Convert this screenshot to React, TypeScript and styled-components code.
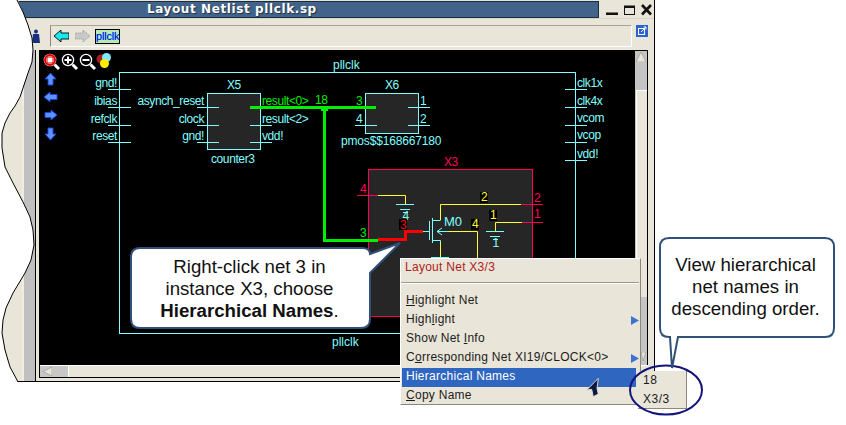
import React from "react";
import styled, { createGlobalStyle } from "styled-components";

const Global = createGlobalStyle`
  html, body { margin: 0; padding: 0; background: #fff; overflow: hidden; }
  #root { width: 846px; height: 425px; }
`;

const BEIGE = "#e9e5d8";
const CYAN = "#80ffff";
const PINK = "#ff0055";
const YEL = "#ffff33";
const GRN = "#00ee00";

const Page = styled.div`
  position: relative;
  width: 846px;
  height: 425px;
  background: #fff;
  overflow: hidden;
  font-family: "Liberation Sans", Arial, sans-serif;
`;
const Win = styled.div`
  width: 655px;
  height: 382px;
  box-sizing: border-box;
  background: ${BEIGE};
  border-right: 1px solid #000;
  border-bottom: 1px solid #000;
  display: flex;
  flex-direction: column;
`;
const TitleRow = styled.div`
  height: 19px;
  display: flex;
  flex: none;
  border-bottom: 1px solid #d8d4c6;
  box-sizing: border-box;
`;
const TitleBar = styled.div`
  width: 599px;
  height: 17px;
  margin-top: 1px;
  box-sizing: border-box;
  background: #43648a;
  border: 1px solid #1a2c40;
  border-left: 0;
  color: #fff;
  font: bold 12px "DejaVu Sans", sans-serif;
  letter-spacing: 0.6px;
  line-height: 14px;
  padding-left: 147px;
  text-shadow: 1px 1px 1px #1c3048;
  white-space: nowrap;
`;
const Controls = styled.div`
  flex: 1;
  display: flex;
  align-items: center;
  justify-content: flex-end;
  padding-right: 1px;
`;
const Toolbar = styled.div`
  height: 31px;
  flex: none;
  display: flex;
  padding: 6px 6px 3px 32px;
  box-sizing: border-box;
`;
const Person = styled.svg`
  width: 9px;
  height: 14px;
  margin: 4px 8px 0 0;
  flex: none;
`;
const ToolPanel = styled.div`
  flex: 1;
  box-sizing: border-box;
  margin-left: 1px;
  height: 22px;
  border-left: 1px solid #8d8a80;
  border-top: 1px solid #a8a59a;
  border-bottom: 1px solid #fff;
  border-right: 1px solid #fff;
  display: flex;
  align-items: center;
  padding-left: 3px;
  gap: 5px;
`;
const BackArrow = styled.svg`
  margin-right: 1px;
`;
const NetChip = styled.div`
  width: 25px;
  height: 15px;
  box-sizing: border-box;
  border: 1px solid #000;
  background: #bdeab4;
  color: #0000e0;
  font: 11px/12px "Liberation Sans", sans-serif;
  letter-spacing: -0.2px;
  white-space: nowrap;
  text-shadow: 0 0 1px #30d0ff;
`;
const EditIcon = styled.svg`
  width: 12px;
  height: 12px;
  flex: none;
  margin: 0 0 0 4px;
`;
const Body = styled.div`
  flex: 1;
  display: flex;
  min-height: 0;
`;
const LeftStrip = styled.div`
  width: 36px;
  flex: none;
  display: flex;
  justify-content: flex-end;
`;
const GrayBar = styled.div`
  width: 11px;
  background: #c0c0c0;
  border-right: 1px solid #000;
  border-left: 2px solid #efece2;
`;
const Inner = styled.div`
  width: 609px;
  margin-left: 3px;
  display: flex;
  flex-direction: column;
  border-left: 1px solid #000;
  border-bottom: 1px solid #000;
  height: 328px;
  box-sizing: border-box;
  position: relative;
`;
const CanvasRow = styled.div`
  display: flex;
  height: 315px;
  flex: none;
`;
const Canvas = styled.svg`
  width: 595px;
  height: 315px;
  display: block;
  background: #000;
  flex: none;
`;
const VScroll = styled.div`
  flex: 1;
  display: flex;
  flex-direction: column;
  background: #c4c4c4;
  border-right: 1px solid #000;
  border-top: 1px solid #000;
`;
const UpArrow = styled.div`
  height: 11px;
  flex: none;
  display: flex;
  justify-content: center;
  padding-top: 1px;
`;
const VTrackTop = styled.div`
  height: 27px;
  flex: none;
`;
const VThumb = styled.div`
  height: 206px;
  flex: none;
  margin-left: 1px;
  background: ${BEIGE};
  border-left: 1px solid #fff;
  border-top: 1px solid #fff;
`;
const DownArrow = styled.div`
  margin-top: auto;
  height: 13px;
  flex: none;
  display: flex;
  justify-content: flex-end;
  padding-right: 1px;
`;
const HScroll = styled.div`
  height: 12px;
  flex: none;
  display: flex;
  box-sizing: border-box;
  background: ${BEIGE};
  border-top: 1px solid #fff;
`;
const HLeft = styled.div`
  width: 29px;
  flex: none;
  background: #c8c8c8;
  border-right: 1px solid #fff;
  display: flex;
  align-items: center;
  padding-left: 3px;
  box-sizing: border-box;
`;
const Torn = styled.svg`
  position: absolute;
  left: 0;
  top: 0;
  width: 60px;
  height: 425px;
`;
const Menu = styled.div`
  position: absolute;
  left: 400px;
  top: 258px;
  width: 241px;
  height: 147px;
  box-sizing: border-box;
  background: ${BEIGE};
  border-left: 1px solid #fff;
  border-top: 1px solid #fff;
  border-right: 1px solid #8a887e;
  border-bottom: 1px solid #8a887e;
  padding-top: 1px;
  font: 12px "Liberation Sans", sans-serif;
  letter-spacing: 0.27px;
  color: #1c1c1c;
`;
const MenuHead = styled.div`
  height: 22px;
  line-height: 15px;
  padding-left: 4px;
  color: #b01c1c;
`;
const MenuSep = styled.div`
  height: 0;
  margin: 0 1px 8px 0;
  border-top: 1px solid #9a988c;
  border-bottom: 1px solid #fff;
`;
const Item = styled.div<{ $on?: boolean }>`
  height: 19px;
  line-height: 17px;
  padding-left: 4px;
  margin: 0 ${(p) => (p.$on ? 4 : 0)}px 0 1px;
  position: relative;
  white-space: nowrap;
  color: ${(p) => (p.$on ? "#fff" : "#1c1c1c")};
  background: ${(p) => (p.$on ? "#2f66bf" : "transparent")};
  u { text-underline-offset: 1px; }
`;
const SubArrow = styled.svg`
  position: absolute;
  right: 1px;
  top: 5px;
  width: 8px;
  height: 9px;
`;
const Sub = styled.div`
  position: absolute;
  left: 638px;
  top: 371px;
  width: 49px;
  height: 38px;
  box-sizing: border-box;
  background: ${BEIGE};
  border-right: 1px solid #8a887e;
  border-bottom: 1px solid #8a887e;
  padding: 0 0 0 5px;
  font: 12px/19px "Liberation Sans", sans-serif;
  letter-spacing: 0.5px;
  color: #1c1c1c;
`;
const Ring = styled.svg`
  position: absolute;
  left: 628px;
  top: 363px;
  width: 78px;
  height: 54px;
`;
const Cursor = styled.svg`
  position: absolute;
  left: 585px;
  top: 376px;
  width: 16px;
  height: 22px;
`;
const Callout = styled.div<{ $x: number; $y: number; $w: number; $h: number; $pad: number; $shift: number }>`
  position: absolute;
  left: ${(p) => p.$x}px;
  top: ${(p) => p.$y}px;
  width: ${(p) => p.$w}px;
  height: ${(p) => p.$h}px;
  box-sizing: border-box;
  padding-top: ${(p) => p.$pad}px;
  padding-right: ${(p) => p.$shift}px;
  text-align: center;
  font: 18.67px/22px "Liberation Sans", Arial, sans-serif;
  color: #111;
`;
const CalloutShape = styled.svg`
  position: absolute;
  left: 0;
  top: 0;
  overflow: visible;
  z-index: 0;
`;
const CalloutText = styled.div`
  position: relative;
  z-index: 1;
`;

const T = (p: React.SVGProps<SVGTextElement>) => (
  <text fontFamily="'Liberation Sans', sans-serif" fontSize={12} letterSpacing={-0.4} fill={CYAN} {...p} />
);

function Mag({ x, kind }: { x: number; kind: "fit" | "plus" | "minus" }) {
  const fit = kind === "fit";
  return (
    <g transform={`translate(${x} 54)`}>
      <line x1="10.5" y1="10.5" x2="15" y2="15" stroke="#fff" strokeWidth="3" />
      {fit && <circle cx="6" cy="6" r="6.3" fill="#fff" />}
      <circle cx="6" cy="6" r={fit ? 5 : 5.6} fill={fit ? "#fff" : "#000"} stroke={fit ? "#e00000" : "#fff"} strokeWidth={fit ? 2 : 1.3} />
      {fit && <rect x="3" y="3" width="6" height="6" fill="#fff" stroke="#e00000" />}
      {!fit && <line x1="2.5" y1="6" x2="9.5" y2="6" stroke="#fff" strokeWidth="2" />}
      {kind === "plus" && <line x1="6" y1="2.5" x2="6" y2="9.5" stroke="#fff" strokeWidth="2" />}
    </g>
  );
}

function Gnd({ x, y, label }: { x: number; y: number; label: string }) {
  return (
    <g stroke={CYAN} strokeWidth="1">
      <line x1={x - 9} y1={y + 0.5} x2={x + 9} y2={y + 0.5} />
      <line x1={x - 5} y1={y + 5.5} x2={x + 5} y2={y + 5.5} />
      <line x1={x - 2} y1={y + 8.5} x2={x + 3} y2={y + 8.5} />
      <T x={x - 2.5} y={y + 16} stroke="none">{label}</T>
    </g>
  );
}

const BlockArrow = ({ d, x, y }: { d: string; x: number; y: number }) => (
  <path transform={`translate(${x} ${y})`} d={d} fill="#5c92ff" stroke="#1c44e0" strokeWidth="0.9" />
);

const Tab = ({ x1, x2, y, c = CYAN }: { x1: number; x2: number; y: number; c?: string }) => (
  <line x1={x1} y1={y + 0.5} x2={x2} y2={y + 0.5} stroke={c} />
);

const leftPorts: [string, number][] = [["gnd!", 87], ["ibias", 105], ["refclk", 123], ["reset", 140]];
const rightPorts: [string, number][] = [["clk1x", 87], ["clk4x", 105], ["vcom", 122], ["vcop", 139], ["vdd!", 158]];

const WAVE =
  "L23 12L28 25L32 38L33 50L32 62L28 73L24 85L20 97L15 106L10 113L5 123L2 133L2 148L5 167L13 183L23 202L30 217L33 230L34 245L33 250L31 260L25 273L13 293L6 308L3 320L2 333L5 350L10 367L17 380L18 382";

function Schematic() {
  return (
    <Canvas viewBox="40 50 595 315">
      <rect x="119.5" y="72.5" width="456" height="261" fill="none" stroke={CYAN} />
      <T x="333" y="69" letterSpacing={0}>pllclk</T>
      <T x="332" y="346" letterSpacing={0}>pllclk</T>

      {leftPorts.map(([t, y]) => <T key={t} x="117" y={y} textAnchor="end">{t}</T>)}
      {[89, 107, 125, 142].map((y) => <Tab key={y} x1={108} x2={131} y={y} />)}

      {rightPorts.map(([t, y]) => <T key={t} x="577" y={y}>{t}</T>)}
      {[89, 107, 125, 142, 160].map((y) => <Tab key={y} x1={565} x2={587} y={y} />)}

      <rect x="207.5" y="93.5" width="53" height="56" fill="#262626" stroke={CYAN} />
      <T x="227" y="89">X5</T>
      <T x="204" y="105" textAnchor="end">asynch_reset</T>
      <T x="204" y="123" textAnchor="end">clock</T>
      <T x="204" y="140" textAnchor="end">gnd!</T>
      <T x="262" y="105" fill={GRN}>result&lt;0&gt;</T>
      <T x="262" y="123">result&lt;2&gt;</T>
      <T x="262" y="140">vdd!</T>
      <T x="211" y="163">counter3</T>
      {[107, 125, 142].map((y) => <Tab key={y} x1={197} x2={219} y={y} />)}
      {[125, 142].map((y) => <Tab key={y} x1={250} x2={272} y={y} />)}

      <rect x="365.5" y="93.5" width="53" height="40" fill="#262626" stroke={CYAN} />
      <T x="385" y="89">X6</T>
      <T x="356" y="105" fill={GRN}>3</T>
      <T x="356" y="123">4</T>
      <T x="420" y="105">1</T>
      <T x="420" y="123">2</T>
      <T x="341" y="145" textLength={100}>pmos$$168667180</T>
      <Tab x1={355} x2={377} y={125} />
      <Tab x1={408} x2={430} y={107} />
      <Tab x1={408} x2={430} y={125} />

      <rect x="368.5" y="169.5" width="164" height="147" fill="#262626" stroke={PINK} />
      <T x="444" y="166" fill={PINK}>X3</T>
      <T x="360" y="193" fill={PINK}>4</T>
      <T x="534" y="202" fill={PINK}>2</T>
      <T x="534" y="218" fill={PINK}>1</T>
      <Tab x1={357} x2={378} y={195} c={PINK} />
      <Tab x1={521} x2={543} y={204} c={PINK} />
      <Tab x1={522} x2={543} y={222} c={PINK} />

      <path d="M378 195.5H405.5V204M440.5 220V204.5H521M495.5 231V222.5H522M449 231.5H477.5V320M440.5 243V320" fill="none" stroke={YEL} />
      <Gnd x={405} y={204} label="4" />
      <Gnd x={495} y={231} label="1" />
      <path d="M429.5 221V240M432.5 218V243M433 220.5H440.5M433 240.5H440.5V243M423 231.5H429" fill="none" stroke={CYAN} />
      <path d="M437 231.5H449M437 231.5L442 228M437 231.5L442 235" fill="none" stroke={CYAN} />
      <T x="444" y="226" letterSpacing={0} fontSize={13}>M0</T>
      <line x1="431" y1="257.5" x2="449" y2="257.5" stroke={CYAN} />

      <rect x="480" y="192" width="8" height="11" fill="#000" />
      <T x="481" y="201" fill={YEL}>2</T>
      <rect x="489" y="210" width="8" height="11" fill="#000" />
      <T x="490" y="219" fill={YEL}>1</T>
      <rect x="471" y="219" width="8" height="11" fill="#000" />
      <T x="472" y="228" fill={YEL}>4</T>
      <rect x="399" y="219" width="8" height="11" fill="#000" />
      <T x="400" y="229" fill="#ff0000">3</T>

      <path d="M250 107.5H376M324.5 107V240.5H378" fill="none" stroke={GRN} strokeWidth="3" />
      <rect x="321" y="107" width="7" height="4" fill={GRN} />
      <T x="315" y="104" fill={GRN}>18</T>
      <T x="360" y="237" fill={GRN}>3</T>
      <path d="M378 239.5H405.5V231.5H423" fill="none" stroke="#ff0000" strokeWidth="3" />

      <Mag x={44} kind="fit" />
      <Mag x={62} kind="plus" />
      <Mag x={80} kind="minus" />
      <circle cx="101" cy="59" r="4.5" fill="#a02020" />
      <circle cx="106.5" cy="57.5" r="4.5" fill="#80e8ff" />
      <circle cx="104.5" cy="63.5" r="4.5" fill="#ffee00" />

      <BlockArrow x={45} y={73} d="M5.5 0L11 6H8V12H3V6H0Z" />
      <BlockArrow x={44} y={92} d="M0 5L6 0V2.5H13V7.5H6V10Z" />
      <BlockArrow x={45} y={110} d="M12 5L6 0V2.5H0V7.5H6V10Z" />
      <BlockArrow x={45} y={128} d="M5.5 12L11 6H8V0H3V6H0Z" />
    </Canvas>
  );
}

const MenuArrow = () => (
  <SubArrow viewBox="0 0 8 9"><path d="M0 0L8 4.5L0 9Z" fill="#3f73d0" /></SubArrow>
);

export default function App() {
  return (
    <Page>
      <Global />
      <Win>
        <TitleRow>
          <TitleBar>Layout Netlist pllclk.sp</TitleBar>
          <Controls>
            <svg width="47" height="14" viewBox="0 0 47 14">
              <rect x="0" y="10.5" width="12" height="2.5" fill="#111" />
              <rect x="18.5" y="4.5" width="10" height="8" fill="none" stroke="#111" />
              <rect x="18" y="3.5" width="11" height="2.5" fill="#111" />
              <path d="M36 3L45 12.5M45 3L36 12.5" stroke="#111" strokeWidth="2.6" />
            </svg>
          </Controls>
        </TitleRow>
        <Toolbar>
          <Person viewBox="0 0 9 14">
            <circle cx="4" cy="2.5" r="2" fill="#1b2f80" />
            <path d="M1 5H7L8 14H0Z" fill="#1b2f80" />
          </Person>
          <ToolPanel>
            <BackArrow width="15" height="12" viewBox="0 0 15 12">
              <path d="M0 6L7 0V3H15V9H7V12Z" fill="#18e8f0" stroke="#000" strokeWidth="0.9" />
            </BackArrow>
            <svg width="15" height="12" viewBox="0 0 15 12">
              <path d="M15 6L8 0V3H0V9H8V12Z" fill="#c8c8c8" stroke="#909090" strokeWidth="0.9" strokeDasharray="1 1" />
            </svg>
            <NetChip>pllclk</NetChip>
          </ToolPanel>
          <EditIcon viewBox="0 0 12 12">
            <rect width="12" height="12" fill="#2a62d0" />
            <rect x="2.5" y="3.5" width="6" height="6" fill="none" stroke="#fff" />
            <path d="M5 7L10 2M7.5 2H10V4.5" fill="none" stroke="#fff" />
          </EditIcon>
        </Toolbar>
        <Body>
          <LeftStrip><GrayBar /></LeftStrip>
          <Inner>
            <CanvasRow>
              <Schematic />
              <VScroll>
                <UpArrow>
                  <svg width="10" height="10" viewBox="0 0 10 10">
                    <path d="M5 0L10 10H0Z" fill={BEIGE} stroke="#999" strokeWidth="0.7" />
                  </svg>
                </UpArrow>
                <VTrackTop />
                <VThumb />
                <DownArrow>
                  <svg width="5" height="9" viewBox="0 0 5 9">
                    <path d="M5 0V0L2 9L0 0Z" fill={BEIGE} stroke="#999" strokeWidth="0.7" />
                  </svg>
                </DownArrow>
              </VScroll>
            </CanvasRow>
            <HScroll>
              <HLeft>
                <svg width="9" height="9" viewBox="0 0 9 9">
                  <path d="M0 4.5L9 0V9Z" fill={BEIGE} stroke="#999" strokeWidth="0.7" />
                </svg>
              </HLeft>
            </HScroll>
          </Inner>
        </Body>
      </Win>

      <Torn viewBox="0 0 60 425">
        <path d={`M-2 -2H17${WAVE}V427H-2Z`} fill="#fff" />
        <path d={`M17 0${WAVE}`} fill="none" stroke="#000" />
      </Torn>

      <Callout $x={130} $y={247} $w={241} $h={82} $pad={9} $shift={2}>
        <CalloutShape width="241" height="82">
          <path d="M10 1H232Q240 1 240 7L270 -4L240 26V72Q240 81 231 81H10Q1 81 1 72V10Q1 1 10 1Z" fill="#fff" stroke="#2f5078" strokeWidth="2" />
        </CalloutShape>
        <CalloutText>
          Right-click net 3 in<br />instance X3, choose<br /><b>Hierarchical Names</b>.
        </CalloutText>
      </Callout>

      <Menu>
        <MenuHead>Layout Net X3/3</MenuHead>
        <MenuSep />
        <Item><u>H</u>ighlight Net</Item>
        <Item>High<u>l</u>ight<MenuArrow /></Item>
        <Item>Show Net <u>I</u>nfo</Item>
        <Item>C<u>o</u>rresponding Net XI19/CLOCK&lt;0&gt;<MenuArrow /></Item>
        <Item $on>Hierarchical Names</Item>
        <Item><u>C</u>opy Name</Item>
      </Menu>

      <Cursor viewBox="0 0 16 22">
        <path d="M13.3 2.3L1.7 14L6.7 13.3L8.3 20.7L13.3 18L12 12.5Z" fill="#0c1a40" stroke="#d8d8d8" strokeWidth="1" />
      </Cursor>

      <Sub>18<br />X3/3</Sub>
      <Ring viewBox="0 0 78 54">
        <ellipse cx="38" cy="27" rx="36" ry="24.5" fill="none" stroke="#14147c" strokeWidth="2" />
      </Ring>

      <Callout $x={659} $y={237} $w={176} $h={101} $pad={17} $shift={3}>
        <CalloutShape width="176" height="132">
          <path d="M10 1H166Q175 1 175 10V91Q175 100 166 100H19L13 131L11 100H10Q1 100 1 91V10Q1 1 10 1Z" fill="#fff" stroke="#2f5078" strokeWidth="2" />
        </CalloutShape>
        <CalloutText>
          View hierarchical<br />net names in<br />descending order.
        </CalloutText>
      </Callout>
    </Page>
  );
}
